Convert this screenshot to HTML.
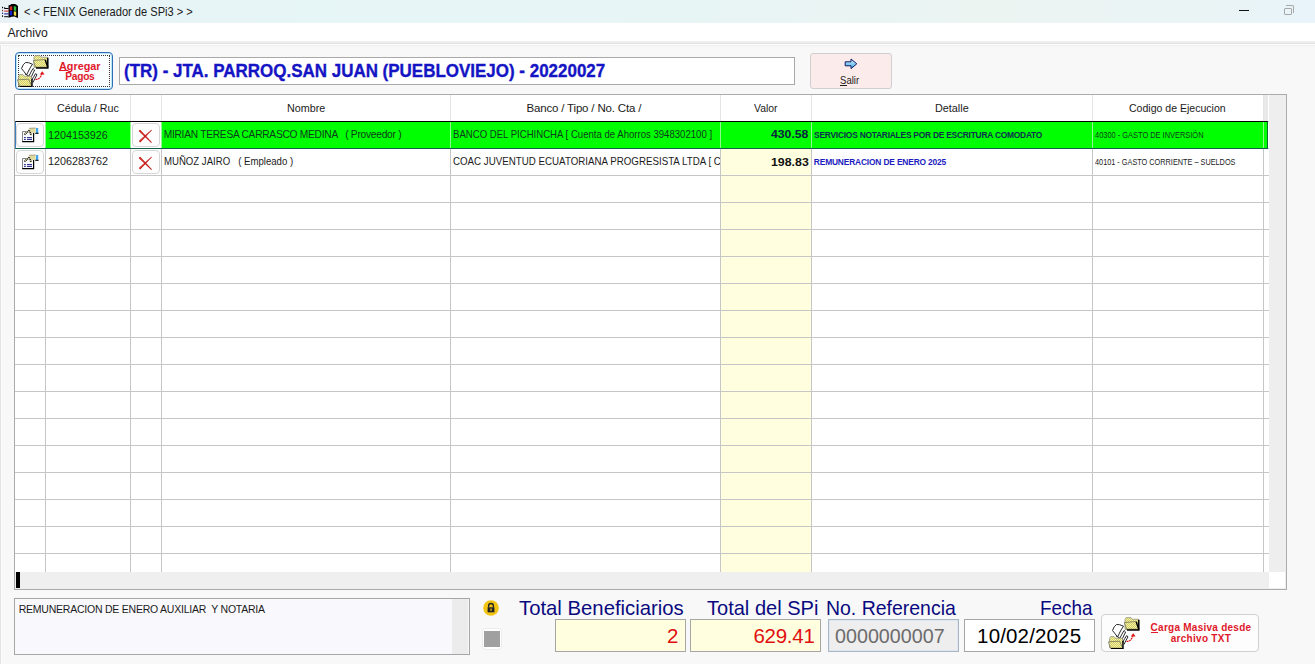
<!DOCTYPE html>
<html><head><meta charset="utf-8">
<style>
*{margin:0;padding:0;box-sizing:border-box}
html,body{width:1315px;height:664px;overflow:hidden;background:#f8f8f8;font-family:"Liberation Sans",sans-serif}
body{position:relative}
.a{position:absolute;white-space:pre}
</style></head><body>
<div class="a" style="left:0px;top:0px;width:1315px;height:23px;background:linear-gradient(90deg,#e9f3f6 0px,#e6f5f6 300px,#e7f5f6 600px,#ebf4f1 1000px,#eaf4f5 1200px,#e8f4fa 1315px)"></div>
<div class="a" style="left:0px;top:23px;width:1315px;height:18px;background:#fff"></div>
<div class="a" style="left:0px;top:41px;width:1315px;height:2px;background:#efefef"></div>
<div class="a" style="left:0px;top:43px;width:1315px;height:1px;background:#e0e0e0"></div>
<div class="a" style="left:0px;top:44px;width:1315px;height:1px;background:#fff"></div>
<div class="a" style="left:0px;top:45px;width:1315px;height:1px;background:#eeeeee"></div>
<div class="a" style="left:0px;top:45px;width:1px;height:620px;background:#e2e2e2"></div>
<div class="a" style="left:1px;top:45px;width:1px;height:620px;background:#fdfdfd"></div>
<svg class="a" style="left:0px;top:1px" width="22" height="20" viewBox="0 0 22 20">
<path d="M8.5 4.5 Q11 3.5 11.5 3 H15 Q16.5 3.5 18 5 V17 Q16 16 14.5 15.5 Q12 15.5 8.5 16.8Z" fill="#000"/>
<path d="M9.8 5.8 L12.2 5 V9.3 H9.8Z" fill="#e02828"/>
<path d="M13.8 5 L16.2 5.8 V9.8 H13.8Z" fill="#28c040"/>
<path d="M9.8 10 H12.2 V14.2 L9.8 14.6Z" fill="#1020d0"/>
<path d="M13.8 10.5 H16.2 V15 L13.8 14.2Z" fill="#f0e040"/>
<rect x="2" y="5.8" width="1.1" height="1.4" fill="#000"/>
<rect x="2" y="8.8" width="1.1" height="1.4" fill="#803030"/>
<rect x="2" y="11.6" width="1.1" height="1.4" fill="#1830a0"/>
<rect x="2" y="14.4" width="1.1" height="1.4" fill="#000"/>
<path d="M4.2 7 H8.5 V8 H4.2Z M4.2 6.3 h1 v1 h-1z" fill="#000"/>
<path d="M4.2 9.6 H8.5 V10.6 H4.2Z" fill="#d01818"/>
<path d="M4.2 12.4 H8.5 V13.4 H4.2Z" fill="#10108a"/>
<path d="M4.2 15.2 H8.5 V16.2 H4.2Z" fill="#000"/>
</svg>
<div class="a" style="left:24.39px;top:6.00px;font-size:12.2px;line-height:12.2px;color:#1b1b1b;letter-spacing:0.000px;transform:scaleX(0.9090);transform-origin:0 0;">&lt; &lt; FENIX Generador de SPi3 &gt; &gt;</div>
<div class="a" style="left:7.45px;top:27.00px;font-size:12.2px;line-height:12.2px;color:#1b1b1b;letter-spacing:-0.058px;">Archivo</div>
<div class="a" style="left:1239px;top:10px;width:10px;height:1px;background:#111"></div>
<div class="a" style="left:1284px;top:8px;width:8px;height:7px;border:1px solid #a8a8a8;border-radius:1px"></div>
<div class="a" style="left:1286px;top:5px;width:8px;height:8px;border-top:1px solid #a8a8a8;border-right:1px solid #a8a8a8;border-top-right-radius:2px"></div>
<div class="a" style="left:15px;top:52px;width:98px;height:38px;border:1px solid #2f6db5;border-radius:4px;background:#fbfeff;box-shadow:inset 0 0 0 1px #b9e6f8"></div>
<div class="a" style="left:18px;top:55px;width:92px;height:32px;border:1px dotted #333"></div>
<svg class="a" style="left:17px;top:55px" width="32" height="32" viewBox="0 0 32 32">
<defs><pattern id="chka" width="2" height="2" patternUnits="userSpaceOnUse"><rect width="2" height="2" fill="#f6f49c"/><rect width="1" height="1" fill="#cfcb6c"/><rect x="1" y="1" width="1" height="1" fill="#cfcb6c"/></pattern></defs>
<path d="M17 2.5 L18.2 0.6 H23 L24 2.2 H30.5 V12.5 H17Z" fill="url(#chka)" stroke="#8a8a7a" stroke-width="0.7"/>
<path d="M16.3 5.6 L28.6 4.4 L31.3 12.2 L18.6 12.2Z" fill="url(#chka)" stroke="#66665a" stroke-width="0.7"/>
<path d="M30.8 2.8 V13 H19" fill="none" stroke="#000" stroke-width="1.5"/>
<path d="M28.2 5 L30.6 12" stroke="#000" stroke-width="1.3"/>
<path d="M4.5 13.5 Q6 9 8.5 7.5 Q11 7 15.5 9.2 Q13.5 12 12 15 Q10.5 18 9.5 20 Q7 16.5 4.5 13.5Z" fill="#fff" stroke="#111" stroke-width="0.9"/>
<path d="M8 18.8 L11.8 21.2 Q14 17 16 13.5 L17.6 15 Q15.8 18.6 13.6 23.4 L10.4 21.8" fill="#fff" stroke="#111" stroke-width="0.9"/>
<path d="M11.8 23.6 L14.6 25.4 Q16.8 21.4 18.6 18.6 L20 19.8 Q18 23 16 27.5" fill="#fff" stroke="#111" stroke-width="0.9"/>
<path d="M1.6 21.5 L2.6 19.6 H6 L7 21.2 H14.5 V31 H1.6Z" fill="url(#chka)" stroke="#8a8a7a" stroke-width="0.7"/>
<path d="M0.4 24.8 L11.5 24.2 L14.8 31.2 L2.6 31.2Z" fill="url(#chka)" stroke="#66665a" stroke-width="0.7"/>
<path d="M15 24 V31.8 H3" fill="none" stroke="#000" stroke-width="1.4"/>
<path d="M18.5 24.5 Q23 24.5 24.8 19" fill="none" stroke="#e01818" stroke-width="1.2" stroke-dasharray="2 0.6"/>
<path d="M22.8 19.6 L25.2 16.2 L27.6 19.6Z" fill="#e01818"/>
</svg>
<div class="a" style="left:59.18px;top:62.00px;font-size:10.2px;line-height:10.2px;color:#e0182a;font-weight:bold;letter-spacing:0.000px;transform:scaleX(1.0624);transform-origin:0 0;">Agregar</div>
<div class="a" style="left:59px;top:70px;width:9px;height:1px;background:#e0182a"></div>
<div class="a" style="left:65.33px;top:72.00px;font-size:10.2px;line-height:10.2px;color:#e0182a;font-weight:bold;letter-spacing:-0.281px;">Pagos</div>
<div class="a" style="left:119px;top:57px;width:676px;height:28px;background:#fff;border:1px solid #a9a9a9"></div>
<div class="a" style="left:123.84px;top:62.00px;font-size:18.2px;line-height:18.2px;color:#1414c4;font-weight:bold;letter-spacing:0.000px;transform:scaleX(0.9330);transform-origin:0 0;-webkit-text-stroke:0.35px #1414c4">(TR) - JTA. PARROQ.SAN JUAN (PUEBLOVIEJO) - 20220027</div>
<div class="a" style="left:810px;top:53px;width:82px;height:36px;background:#fcebeb;border:1px solid #cfcfcf;border-radius:3px"></div>
<svg class="a" style="left:844px;top:58px" width="14" height="12" viewBox="0 0 14 12">
<defs><linearGradient id="ag" x1="0" y1="0" x2="0" y2="1"><stop offset="0" stop-color="#d8f2ff"/><stop offset="1" stop-color="#3aa8ec"/></linearGradient></defs>
<path d="M1.2 3.8 H7 V1 L12.8 5.8 L7 10.6 V7.8 H1.2Z" fill="url(#ag)" stroke="#0c1a60" stroke-width="1" stroke-linejoin="miter"/>
</svg>
<div class="a" style="left:840.08px;top:75.00px;font-size:11.5px;line-height:11.5px;color:#1b1b1b;letter-spacing:0.000px;transform:scaleX(0.8315);transform-origin:0 0;">Salir</div>
<div class="a" style="left:840px;top:85px;width:7px;height:1px;background:#1b1b1b"></div>
<div class="a" style="left:14px;top:94px;width:1273px;height:496px;border:1px solid #ababab;background:#eeeeee"></div>
<div class="a" style="left:15px;top:95px;width:1254px;height:477px;background:#fff"></div>
<div class="a" style="left:15px;top:572px;width:1254px;height:16px;background:#efefef"></div>
<div class="a" style="left:16px;top:572px;width:4px;height:16px;background:#000"></div>
<div class="a" style="left:1269px;top:572px;width:16px;height:16px;background:#fff"></div>
<div class="a" style="left:1264px;top:95px;width:4px;height:26px;background:#e9e9e9"></div>
<div class="a" style="left:721px;top:149px;width:90px;height:423px;background:#ffffe0"></div>
<div class="a" style="left:15px;top:121px;width:1254px;height:1px;background:#c6c6c6"></div>
<div class="a" style="left:15px;top:148px;width:1254px;height:1px;background:#c6c6c6"></div>
<div class="a" style="left:15px;top:175px;width:1254px;height:1px;background:#c6c6c6"></div>
<div class="a" style="left:15px;top:202px;width:1254px;height:1px;background:#c6c6c6"></div>
<div class="a" style="left:15px;top:229px;width:1254px;height:1px;background:#c6c6c6"></div>
<div class="a" style="left:15px;top:256px;width:1254px;height:1px;background:#c6c6c6"></div>
<div class="a" style="left:15px;top:283px;width:1254px;height:1px;background:#c6c6c6"></div>
<div class="a" style="left:15px;top:310px;width:1254px;height:1px;background:#c6c6c6"></div>
<div class="a" style="left:15px;top:337px;width:1254px;height:1px;background:#c6c6c6"></div>
<div class="a" style="left:15px;top:364px;width:1254px;height:1px;background:#c6c6c6"></div>
<div class="a" style="left:15px;top:391px;width:1254px;height:1px;background:#c6c6c6"></div>
<div class="a" style="left:15px;top:418px;width:1254px;height:1px;background:#c6c6c6"></div>
<div class="a" style="left:15px;top:445px;width:1254px;height:1px;background:#c6c6c6"></div>
<div class="a" style="left:15px;top:472px;width:1254px;height:1px;background:#c6c6c6"></div>
<div class="a" style="left:15px;top:499px;width:1254px;height:1px;background:#c6c6c6"></div>
<div class="a" style="left:15px;top:526px;width:1254px;height:1px;background:#c6c6c6"></div>
<div class="a" style="left:15px;top:553px;width:1254px;height:1px;background:#c6c6c6"></div>
<div class="a" style="left:45px;top:95px;width:1px;height:26px;background:#e4e4e4"></div>
<div class="a" style="left:45px;top:121px;width:1px;height:451px;background:#c6c6c6"></div>
<div class="a" style="left:130px;top:95px;width:1px;height:26px;background:#e4e4e4"></div>
<div class="a" style="left:130px;top:121px;width:1px;height:451px;background:#c6c6c6"></div>
<div class="a" style="left:161px;top:95px;width:1px;height:26px;background:#e4e4e4"></div>
<div class="a" style="left:161px;top:121px;width:1px;height:451px;background:#c6c6c6"></div>
<div class="a" style="left:450px;top:95px;width:1px;height:26px;background:#e4e4e4"></div>
<div class="a" style="left:450px;top:121px;width:1px;height:451px;background:#c6c6c6"></div>
<div class="a" style="left:720px;top:95px;width:1px;height:26px;background:#e4e4e4"></div>
<div class="a" style="left:720px;top:121px;width:1px;height:451px;background:#c6c6c6"></div>
<div class="a" style="left:811px;top:95px;width:1px;height:26px;background:#e4e4e4"></div>
<div class="a" style="left:811px;top:121px;width:1px;height:451px;background:#c6c6c6"></div>
<div class="a" style="left:1092px;top:95px;width:1px;height:26px;background:#e4e4e4"></div>
<div class="a" style="left:1092px;top:121px;width:1px;height:451px;background:#c6c6c6"></div>
<div class="a" style="left:1263px;top:95px;width:1px;height:26px;background:#e4e4e4"></div>
<div class="a" style="left:1263px;top:121px;width:1px;height:451px;background:#c6c6c6"></div>
<div class="a" style="left:15px;top:121px;width:1253px;height:28px;background:#00ff00;border-top:1px solid #000;border-bottom:1px solid #12604a;border-left:1px solid #3c7fc0;border-right:1px solid #0a6a30"></div>
<div class="a" style="left:45px;top:122px;width:1px;height:26px;background:#90f890"></div>
<div class="a" style="left:130px;top:122px;width:1px;height:26px;background:#90f890"></div>
<div class="a" style="left:161px;top:122px;width:1px;height:26px;background:#90f890"></div>
<div class="a" style="left:450px;top:122px;width:1px;height:26px;background:#90f890"></div>
<div class="a" style="left:720px;top:122px;width:1px;height:26px;background:#90f890"></div>
<div class="a" style="left:811px;top:122px;width:1px;height:26px;background:#90f890"></div>
<div class="a" style="left:1092px;top:122px;width:1px;height:26px;background:#90f890"></div>
<div class="a" style="left:1263px;top:122px;width:1px;height:26px;background:#90f890"></div>
<div class="a" style="left:16px;top:122px;width:29px;height:26px;background:#fff"></div>
<div class="a" style="left:131px;top:122px;width:30px;height:26px;background:#fff"></div>
<div class="a" style="left:57.02px;top:103.00px;font-size:11.5px;line-height:11.5px;color:#1b1b1b;letter-spacing:0.000px;transform:scaleX(0.9295);transform-origin:0 0;">Cédula / Ruc</div>
<div class="a" style="left:286.58px;top:103.00px;font-size:11.5px;line-height:11.5px;color:#1b1b1b;letter-spacing:0.000px;transform:scaleX(0.9342);transform-origin:0 0;">Nombre</div>
<div class="a" style="left:526.52px;top:103.00px;font-size:11.5px;line-height:11.5px;color:#1b1b1b;letter-spacing:-0.175px;">Banco / Tipo / No. Cta /</div>
<div class="a" style="left:753.59px;top:103.00px;font-size:11.5px;line-height:11.5px;color:#1b1b1b;letter-spacing:0.000px;transform:scaleX(0.9054);transform-origin:0 0;">Valor</div>
<div class="a" style="left:934.88px;top:103.00px;font-size:11.5px;line-height:11.5px;color:#1b1b1b;letter-spacing:0.000px;transform:scaleX(0.9396);transform-origin:0 0;">Detalle</div>
<div class="a" style="left:1129.03px;top:103.00px;font-size:11.5px;line-height:11.5px;color:#1b1b1b;letter-spacing:0.000px;transform:scaleX(0.9162);transform-origin:0 0;">Codigo de Ejecucion</div>
<div class="a" style="left:16px;top:123px;width:28px;height:24px;background:#fdfdfd;border:1px solid #d6d6d6;border-radius:4px"></div>
<svg class="a" style="left:20px;top:126px" width="20" height="18" viewBox="0 0 20 18">
<rect x="2.5" y="5.5" width="11" height="9.8" fill="#f8fbff"/>
<path d="M2.5 15.5 V5.5 H13.5" fill="none" stroke="#858585" stroke-width="1"/>
<path d="M13.6 7 V15.6 H2.2" fill="none" stroke="#000" stroke-width="1.2"/>
<path d="M4 11.6 h1.8 M7 11.6 h5 M4 13.4 h1.8 M7 13.4 h5" stroke="#1e1e86" stroke-width="1"/>
<path d="M4.5 8.6 L9.6 4 L11.2 9.6" fill="none" stroke="#efe9c0" stroke-width="2"/>
<path d="M4.5 8.6 L9.6 4 L11.2 9.6" fill="none" stroke="#111" stroke-width="1.9" stroke-dasharray="0.9 0.9"/>
<path d="M9 2.3 L15.6 2 V6.8 L11.5 7.2Z" fill="#e0d9a0"/>
<path d="M9 2.3 L15.6 2" stroke="#8a8460" stroke-width="0.7"/>
<rect x="16" y="2" width="2.2" height="5.6" fill="#3ea4ec"/>
<rect x="15.2" y="6.8" width="3.4" height="1" fill="#000"/>
</svg>
<div class="a" style="left:132px;top:123px;width:28px;height:24px;background:#fdfdfd;border:1px solid #d6d6d6;border-radius:4px"></div>
<svg class="a" style="left:137px;top:128px" width="16" height="16" viewBox="0 0 16 16">
<path d="M1.8 3.2 Q2 2 3.2 1.8 L14.9 14.3 L14.3 14.9Z" fill="#c41818"/>
<path d="M1.8 13 L3.2 14.4 L14.9 2.3 L14.3 1.8Z" fill="#c41818"/>
<path d="M2.6 2.7 L7.5 8" stroke="#f07050" stroke-width="0.4"/>
<path d="M2.6 13.6 L7 9" stroke="#f07050" stroke-width="0.4"/>
</svg>
<div class="a" style="left:16px;top:150px;width:28px;height:24px;background:#fdfdfd;border:1px solid #d6d6d6;border-radius:4px"></div>
<svg class="a" style="left:20px;top:153px" width="20" height="18" viewBox="0 0 20 18">
<rect x="2.5" y="5.5" width="11" height="9.8" fill="#f8fbff"/>
<path d="M2.5 15.5 V5.5 H13.5" fill="none" stroke="#858585" stroke-width="1"/>
<path d="M13.6 7 V15.6 H2.2" fill="none" stroke="#000" stroke-width="1.2"/>
<path d="M4 11.6 h1.8 M7 11.6 h5 M4 13.4 h1.8 M7 13.4 h5" stroke="#1e1e86" stroke-width="1"/>
<path d="M4.5 8.6 L9.6 4 L11.2 9.6" fill="none" stroke="#efe9c0" stroke-width="2"/>
<path d="M4.5 8.6 L9.6 4 L11.2 9.6" fill="none" stroke="#111" stroke-width="1.9" stroke-dasharray="0.9 0.9"/>
<path d="M9 2.3 L15.6 2 V6.8 L11.5 7.2Z" fill="#e0d9a0"/>
<path d="M9 2.3 L15.6 2" stroke="#8a8460" stroke-width="0.7"/>
<rect x="16" y="2" width="2.2" height="5.6" fill="#3ea4ec"/>
<rect x="15.2" y="6.8" width="3.4" height="1" fill="#000"/>
</svg>
<div class="a" style="left:132px;top:150px;width:28px;height:24px;background:#fdfdfd;border:1px solid #d6d6d6;border-radius:4px"></div>
<svg class="a" style="left:137px;top:155px" width="16" height="16" viewBox="0 0 16 16">
<path d="M1.8 3.2 Q2 2 3.2 1.8 L14.9 14.3 L14.3 14.9Z" fill="#c41818"/>
<path d="M1.8 13 L3.2 14.4 L14.9 2.3 L14.3 1.8Z" fill="#c41818"/>
<path d="M2.6 2.7 L7.5 8" stroke="#f07050" stroke-width="0.4"/>
<path d="M2.6 13.6 L7 9" stroke="#f07050" stroke-width="0.4"/>
</svg>
<div class="a" style="left:48.10px;top:130.00px;font-size:10.8px;line-height:10.8px;color:#0e3a1e;letter-spacing:-0.047px;">1204153926</div>
<div class="a" style="left:48.10px;top:156.00px;font-size:10.8px;line-height:10.8px;color:#1b1b1b;letter-spacing:-0.025px;">1206283762</div>
<div class="a" style="left:163.67px;top:130.00px;font-size:10.2px;line-height:10.2px;color:#0e3a1e;letter-spacing:-0.249px;">MIRIAN TERESA CARRASCO MEDINA   ( Proveedor )</div>
<div class="a" style="left:163.73px;top:157.00px;font-size:10.2px;line-height:10.2px;color:#1b1b1b;letter-spacing:0.000px;transform:scaleX(0.9424);transform-origin:0 0;">MUÑOZ JAIRO   ( Empleado )</div>
<div class="a" style="left:452.93px;top:130.00px;font-size:10.2px;line-height:10.2px;color:#0e3a1e;letter-spacing:0.000px;transform:scaleX(0.9408);transform-origin:0 0;">BANCO DEL PICHINCHA [ Cuenta de Ahorros 3948302100 ]</div>
<div class="a" style="left:451px;top:150px;width:269px;height:25px;overflow:hidden">
<div class="a" style="left:2.27px;top:7.00px;font-size:10.2px;line-height:10.2px;color:#1b1b1b;letter-spacing:0.000px;transform:scaleX(0.9565);transform-origin:0 0;">COAC JUVENTUD ECUATORIANA PROGRESISTA LTDA [ Cuenta</div>
</div>
<div class="a" style="left:771.36px;top:129.00px;font-size:11px;line-height:11px;color:#0c2440;font-weight:bold;letter-spacing:0.000px;transform:scaleX(1.1109);transform-origin:0 0;">430.58</div>
<div class="a" style="left:771.00px;top:157.00px;font-size:11px;line-height:11px;color:#111;font-weight:bold;letter-spacing:0.000px;transform:scaleX(1.1218);transform-origin:0 0;">198.83</div>
<div class="a" style="left:814.07px;top:131.00px;font-size:8.4px;line-height:8.4px;color:#0c3050;font-weight:bold;letter-spacing:-0.221px;">SERVICIOS NOTARIALES POR DE ESCRITURA COMODATO</div>
<div class="a" style="left:813.82px;top:158.00px;font-size:8.4px;line-height:8.4px;color:#1c1cc0;font-weight:bold;letter-spacing:-0.157px;">REMUNERACION DE ENERO 2025</div>
<div class="a" style="left:1094.84px;top:132.00px;font-size:8.2px;line-height:8.2px;color:#0e3a1e;letter-spacing:0.000px;transform:scaleX(0.9079);transform-origin:0 0;">40300 - GASTO DE INVERSIÓN</div>
<div class="a" style="left:1094.84px;top:159.00px;font-size:8.2px;line-height:8.2px;color:#1b1b1b;letter-spacing:0.000px;transform:scaleX(0.8931);transform-origin:0 0;">40101 - GASTO CORRIENTE – SUELDOS</div>
<div class="a" style="left:14px;top:598px;width:456px;height:57px;background:#f9f9fd;border:1px solid #a6a6a6"></div>
<div class="a" style="left:452px;top:599px;width:16px;height:55px;background:#ececec"></div>
<div class="a" style="left:18.73px;top:604.00px;font-size:10.5px;line-height:10.5px;color:#1b1b1b;letter-spacing:-0.231px;">REMUNERACION DE ENERO AUXILIAR  Y NOTARIA</div>
<svg class="a" style="left:483px;top:600px" width="16" height="16" viewBox="0 0 16 16">
<circle cx="8" cy="8" r="7.8" fill="#f2c414"/>
<path d="M5.6 7.5 v-1.6 a2.4 2.4 0 0 1 4.8 0 v1.6" fill="none" stroke="#222" stroke-width="1.3"/>
<rect x="4.6" y="7.3" width="6.8" height="5" fill="#222"/>
<rect x="7.3" y="8.5" width="1.4" height="2.4" fill="#d8b030"/>
</svg>
<div class="a" style="left:482px;top:628px;width:20px;height:22px;background:#fff;border:1px solid #ececec;border-radius:4px"></div>
<div class="a" style="left:484px;top:631px;width:16px;height:16px;background:#a0a0a0"></div>
<div class="a" style="left:519.02px;top:597.00px;font-size:21px;line-height:21px;color:#0a0a80;letter-spacing:0.000px;transform:scaleX(0.9667);transform-origin:0 0;">Total Beneficiarios</div>
<div class="a" style="left:707.12px;top:597.00px;font-size:21px;line-height:21px;color:#0a0a80;letter-spacing:0.000px;transform:scaleX(0.9541);transform-origin:0 0;">Total del SPi</div>
<div class="a" style="left:826.48px;top:597.00px;font-size:21px;line-height:21px;color:#0a0a80;letter-spacing:0.000px;transform:scaleX(0.9265);transform-origin:0 0;">No. Referencia</div>
<div class="a" style="left:1039.92px;top:597.00px;font-size:21px;line-height:21px;color:#0a0a80;letter-spacing:0.000px;transform:scaleX(0.9004);transform-origin:0 0;">Fecha</div>
<div class="a" style="left:555px;top:619px;width:131px;height:33px;background:#ffffe0;border:1px solid #a6a6a6"></div>
<div class="a" style="left:690px;top:619px;width:131px;height:33px;background:#ffffe0;border:1px solid #a6a6a6"></div>
<div class="a" style="left:828px;top:619px;width:131px;height:33px;background:#eeeeee;border:1px solid #a8b6c6;box-shadow:inset 0 0 0 1px #dfe6ee"></div>
<div class="a" style="left:964px;top:619px;width:131px;height:33px;background:#fff;border:1px solid #a6a6a6"></div>
<div class="a" style="left:667.00px;top:626.00px;font-size:20.5px;line-height:20.5px;color:#e01010;letter-spacing:0.000px;">2</div>
<div class="a" style="left:753.50px;top:626.00px;font-size:20.5px;line-height:20.5px;color:#e01010;letter-spacing:-0.285px;">629.41</div>
<div class="a" style="left:834.88px;top:626.00px;font-size:20.5px;line-height:20.5px;color:#6c6c6c;letter-spacing:0.000px;transform:scaleX(0.9612);transform-origin:0 0;">0000000007</div>
<div class="a" style="left:977.10px;top:626.00px;font-size:20.5px;line-height:20.5px;color:#000;letter-spacing:0.150px;">10/02/2025</div>
<div class="a" style="left:1101px;top:614px;width:158px;height:38px;background:#fdfdfd;border:1px solid #d0d0d0;border-radius:4px"></div>
<svg class="a" style="left:1108px;top:617px" width="32" height="32" viewBox="0 0 32 32">
<defs><pattern id="chkb" width="2" height="2" patternUnits="userSpaceOnUse"><rect width="2" height="2" fill="#f6f49c"/><rect width="1" height="1" fill="#cfcb6c"/><rect x="1" y="1" width="1" height="1" fill="#cfcb6c"/></pattern></defs>
<path d="M17 2.5 L18.2 0.6 H23 L24 2.2 H30.5 V12.5 H17Z" fill="url(#chkb)" stroke="#8a8a7a" stroke-width="0.7"/>
<path d="M16.3 5.6 L28.6 4.4 L31.3 12.2 L18.6 12.2Z" fill="url(#chkb)" stroke="#66665a" stroke-width="0.7"/>
<path d="M30.8 2.8 V13 H19" fill="none" stroke="#000" stroke-width="1.5"/>
<path d="M28.2 5 L30.6 12" stroke="#000" stroke-width="1.3"/>
<path d="M4.5 13.5 Q6 9 8.5 7.5 Q11 7 15.5 9.2 Q13.5 12 12 15 Q10.5 18 9.5 20 Q7 16.5 4.5 13.5Z" fill="#fff" stroke="#111" stroke-width="0.9"/>
<path d="M8 18.8 L11.8 21.2 Q14 17 16 13.5 L17.6 15 Q15.8 18.6 13.6 23.4 L10.4 21.8" fill="#fff" stroke="#111" stroke-width="0.9"/>
<path d="M11.8 23.6 L14.6 25.4 Q16.8 21.4 18.6 18.6 L20 19.8 Q18 23 16 27.5" fill="#fff" stroke="#111" stroke-width="0.9"/>
<path d="M1.6 21.5 L2.6 19.6 H6 L7 21.2 H14.5 V31 H1.6Z" fill="url(#chkb)" stroke="#8a8a7a" stroke-width="0.7"/>
<path d="M0.4 24.8 L11.5 24.2 L14.8 31.2 L2.6 31.2Z" fill="url(#chkb)" stroke="#66665a" stroke-width="0.7"/>
<path d="M15 24 V31.8 H3" fill="none" stroke="#000" stroke-width="1.4"/>
<path d="M18.5 24.5 Q23 24.5 24.8 19" fill="none" stroke="#e01818" stroke-width="1.2" stroke-dasharray="2 0.6"/>
<path d="M22.8 19.6 L25.2 16.2 L27.6 19.6Z" fill="#e01818"/>
</svg>
<div class="a" style="left:1150.62px;top:623.00px;font-size:10px;line-height:10px;color:#e0182a;font-weight:bold;letter-spacing:0.253px;">Carga Masiva desde</div>
<div class="a" style="left:1151px;top:632px;width:7px;height:1px;background:#e0182a"></div>
<div class="a" style="left:1170.75px;top:634.00px;font-size:10px;line-height:10px;color:#e0182a;font-weight:bold;letter-spacing:0.283px;">archivo TXT</div>
</body></html>
